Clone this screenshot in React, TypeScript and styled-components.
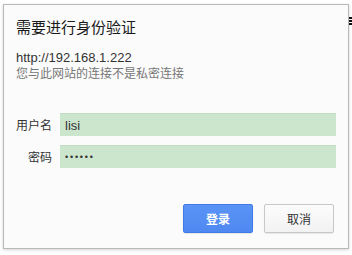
import { FC } from "react";
import styled, { createGlobalStyle } from "styled-components";

const GlobalStyle = createGlobalStyle`
  html, body {
    margin: 0;
    padding: 0;
    background: #ffffff;
  }
  body {
    font-family: "Liberation Sans", "Noto Sans CJK SC", sans-serif;
    width: 352px;
    height: 255px;
    overflow: hidden;
    position: relative;
  }
`;

const App: FC = () => {
  return (
    <>
      <GlobalStyle />
      <MenuMark>
        <span />
        <span />
        <span />
      </MenuMark>
      <Dialog>
        <Title>需要进行身份验证</Title>
        <Url>http://192.168.1.222</Url>
        <Note>您与此网站的连接不是私密连接</Note>
        <Form>
          <Label>用户名</Label>
          <Field defaultValue="lisi" />
          <Label>密码</Label>
          <Field type="password" defaultValue="123456" secret />
        </Form>
        <Actions>
          <Button primary>登录</Button>
          <Button>取消</Button>
        </Actions>
      </Dialog>
    </>
  );
};

export default App;

const MenuMark = styled.div`
  position: absolute;
  top: 17px;
  left: 349px;
  width: 4px;
  display: flex;
  flex-direction: column;
  gap: 1px;

  span {
    display: block;
    height: 2px;
    background: #111;
  }
`;

const Dialog = styled.div`
  box-sizing: border-box;
  width: 346px;
  margin: 4px 0 0 3px;
  padding: 13px 12px 15px 12px;
  background: #fbfbfb;
  border: 1px solid #b9b9b9;
  box-shadow: 0 1px 3px rgba(0, 0, 0, 0.18);
  display: flex;
  flex-direction: column;
`;

const Title = styled.div`
  font-size: 15px;
  line-height: 20px;
  color: #1a1a1a;
`;

const Url = styled.div`
  margin-top: 12px;
  font-size: 13px;
  line-height: 16px;
  color: #333;
`;

const Note = styled.div`
  font-size: 12px;
  line-height: 16px;
  color: #777;
`;

const Form = styled.div`
  margin-top: 31px;
  display: grid;
  grid-template-columns: 36px 1fr;
  column-gap: 8px;
  row-gap: 9px;
  align-items: center;
`;

const Label = styled.label`
  font-size: 12px;
  color: #333;
  text-align: right;
  white-space: nowrap;
`;

interface FieldProps {
  secret?: boolean;
}

const Field = styled.input<FieldProps>`
  box-sizing: border-box;
  height: 23px;
  width: 100%;
  margin: 0;
  padding: 0 5px;
  border: none;
  border-top: 1px solid #c2dcc3;
  outline: none;
  background: #cce6cd;
  color: #333;
  font-family: "Liberation Sans", "Noto Sans CJK SC", sans-serif;
  font-size: ${(props) => (props.secret ? "9px" : "13px")};
  letter-spacing: ${(props) => (props.secret ? "1.8px" : "0")};
`;

const Actions = styled.div`
  margin-top: 36px;
  display: flex;
  justify-content: flex-end;
  gap: 11px;
  padding-right: 2px;
`;

interface ButtonProps {
  primary?: boolean;
}

const Button = styled.button<ButtonProps>`
  box-sizing: border-box;
  width: 70px;
  height: 29px;
  margin: 0;
  padding: 0;
  border-radius: 2px;
  font-family: "Liberation Sans", "Noto Sans CJK SC", sans-serif;
  font-size: 12px;
  font-weight: ${(props) => (props.primary ? 700 : 400)};
  color: ${(props) => (props.primary ? "#ffffff" : "#333")};
  background: ${(props) =>
    props.primary
      ? "linear-gradient(#5b94f6, #4f88f1)"
      : "linear-gradient(#fcfcfc, #f2f2f2)"};
  border: 1px solid ${(props) => (props.primary ? "#3f7be6" : "#c8c8c8")};
  box-shadow: 0 1px 1px rgba(0, 0, 0, 0.08);
`;
